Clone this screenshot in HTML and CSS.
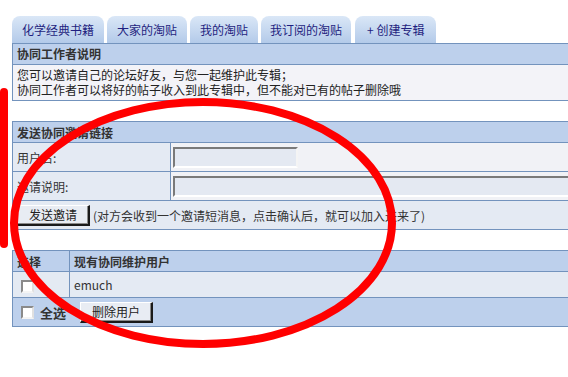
FILE: index.html
```html
<!DOCTYPE html>
<html>
<head>
<meta charset="utf-8">
<link rel="stylesheet" href="styles.css">
</head>
<body>
<div class="page">
  <div class="tabs">
    <div class="tab">化学经典书籍</div>
    <div class="tab">大家的淘贴</div>
    <div class="tab">我的淘贴</div>
    <div class="tab tab-wide">我订阅的淘贴</div>
    <div class="tab tab-create">+ 创建专辑</div>
  </div>

  <div class="box">
    <div class="head">协同工作者说明</div>
    <div class="note">
      <div class="line">您可以邀请自己的论坛好友，与您一起维护此专辑；</div>
      <div class="line">协同工作者可以将好的帖子收入到此专辑中，但不能对已有的帖子删除哦</div>
    </div>
  </div>

  <table class="grid invite">
    <tr class="hrow"><th colspan="2">发送协同邀请链接</th></tr>
    <tr class="frow">
      <td class="lab">用户名:</td>
      <td class="fld"><span class="inp inp-short"></span></td>
    </tr>
    <tr class="frow">
      <td class="lab">邀请说明:</td>
      <td class="fld"><span class="inp inp-long"></span></td>
    </tr>
    <tr class="brow">
      <td colspan="2"><span class="btn">发送邀请</span><span class="hint">(对方会收到一个邀请短消息，点击确认后，就可以加入进来了)</span></td>
    </tr>
  </table>

  <table class="grid users">
    <tr class="hrow"><th class="sel">选择</th><th>现有协同维护用户</th></tr>
    <tr class="urow"><td class="sel"><span class="chk"></span></td><td class="name">emuch</td></tr>
    <tr class="frow2"><td colspan="2"><span class="chk"></span><span class="all">全选</span><span class="btn btn-del">删除用户</span></td></tr>
  </table>
</div>

<svg class="marks" width="568" height="377" viewBox="0 0 568 377">
  <rect x="0" y="88" width="8" height="160" rx="4" fill="#ff0000"/>
  <ellipse cx="203" cy="223" rx="189" ry="121" fill="none" stroke="#ff0000" stroke-width="8"/>
</svg>
</body>
</html>
```

FILE: styles.css
```css
html, body {
  margin: 0;
  padding: 0;
}
body {
  width: 568px;
  height: 377px;
  overflow: hidden;
  position: relative;
  background: #ffffff;
  font-family: "Noto Sans CJK SC", "Noto Sans", sans-serif;
  font-size: 12px;
  color: #333333;
}
.page {
  width: 640px;
  padding: 16px 0 0 12px;
}
.tabs {
  display: flex;
  gap: 3px;
  height: 27px;
}
.tab {
  height: 27px;
  line-height: 27px;
  padding: 0 10px;
  border-radius: 8px 8px 0 0;
  background: linear-gradient(#dae7f7, #b3cae9);
  color: #1f1f80;
  white-space: nowrap;
}
.tab-wide { padding: 0 9px; }
.tab-create { padding: 0 12px; margin-left: 1px; }

.box {
  border: 1px solid #7393bd;
  width: 620px;
}
.head {
  height: 20px;
  line-height: 20px;
  padding-left: 4px;
  background: #bdd0ec;
  font-weight: bold;
  border-bottom: 1px solid #7393bd;
}
.note {
  background: #f3f3f8;
  padding: 2px 4px 3px;
  color: #222;
}
.line {
  height: 15px;
  line-height: 15px;
  white-space: nowrap;
}

.grid {
  border-collapse: collapse;
  width: 622px;
}
.grid td, .grid th {
  border: 1px solid #7393bd;
  padding: 0 0 0 4px;
  text-align: left;
}
.invite { margin-top: 20px; }
.hrow th {
  height: 20px;
  background: #bdd0ec;
  font-weight: bold;
}
.frow td { height: 28px; }
.lab {
  width: 153px;
  background: #e4eaf3;
}
.fld {
  background: #f1f2f6;
  padding-left: 2px !important;
}
.inp {
  display: block;
  height: 17px;
  background: #e4e9f2;
  border-style: solid;
  border-width: 2px;
  border-color: #7a7a7a #f4f4f4 #ffffff #7a7a7a;
}
.inp-short { width: 121px; }
.inp-long { width: 420px; }
.brow td {
  height: 28px;
  background: #e4eaf3;
}
.btn {
  display: inline-block;
  box-sizing: border-box;
  height: 21px;
  line-height: 18px;
  padding: 0 11px;
  background: #e8ecf3;
  border-style: solid;
  border-width: 1px 2px 2px 1px;
  border-color: #ffffff #1a1a1a #1a1a1a #ffffff;
  box-shadow: inset -1px -1px 0 #8a8a8a;
  color: #222;
  vertical-align: middle;
}
.hint {
  margin-left: 3px;
  vertical-align: middle;
}

.users { margin-top: 20px; }
.users .sel { width: 52px; }
.urow td {
  height: 25px;
  background: #e4eaf3;
}
.name { padding-left: 4px; }
.frow2 td {
  height: 28px;
  background: #bdd0ec;
}
.chk {
  display: inline-block;
  width: 9px;
  height: 9px;
  margin-left: 4px;
  background: #ffffff;
  border-style: solid;
  border-width: 2px;
  border-color: #8a8a8a #e0e0e0 #f4f4f4 #8a8a8a;
  vertical-align: middle;
}
.all {
  margin-left: 6px;
  font-weight: bold;
  font-size: 13px;
  vertical-align: middle;
}
.btn-del { margin-left: 14px; }

.marks {
  position: absolute;
  left: 0;
  top: 0;
  pointer-events: none;
}
```
